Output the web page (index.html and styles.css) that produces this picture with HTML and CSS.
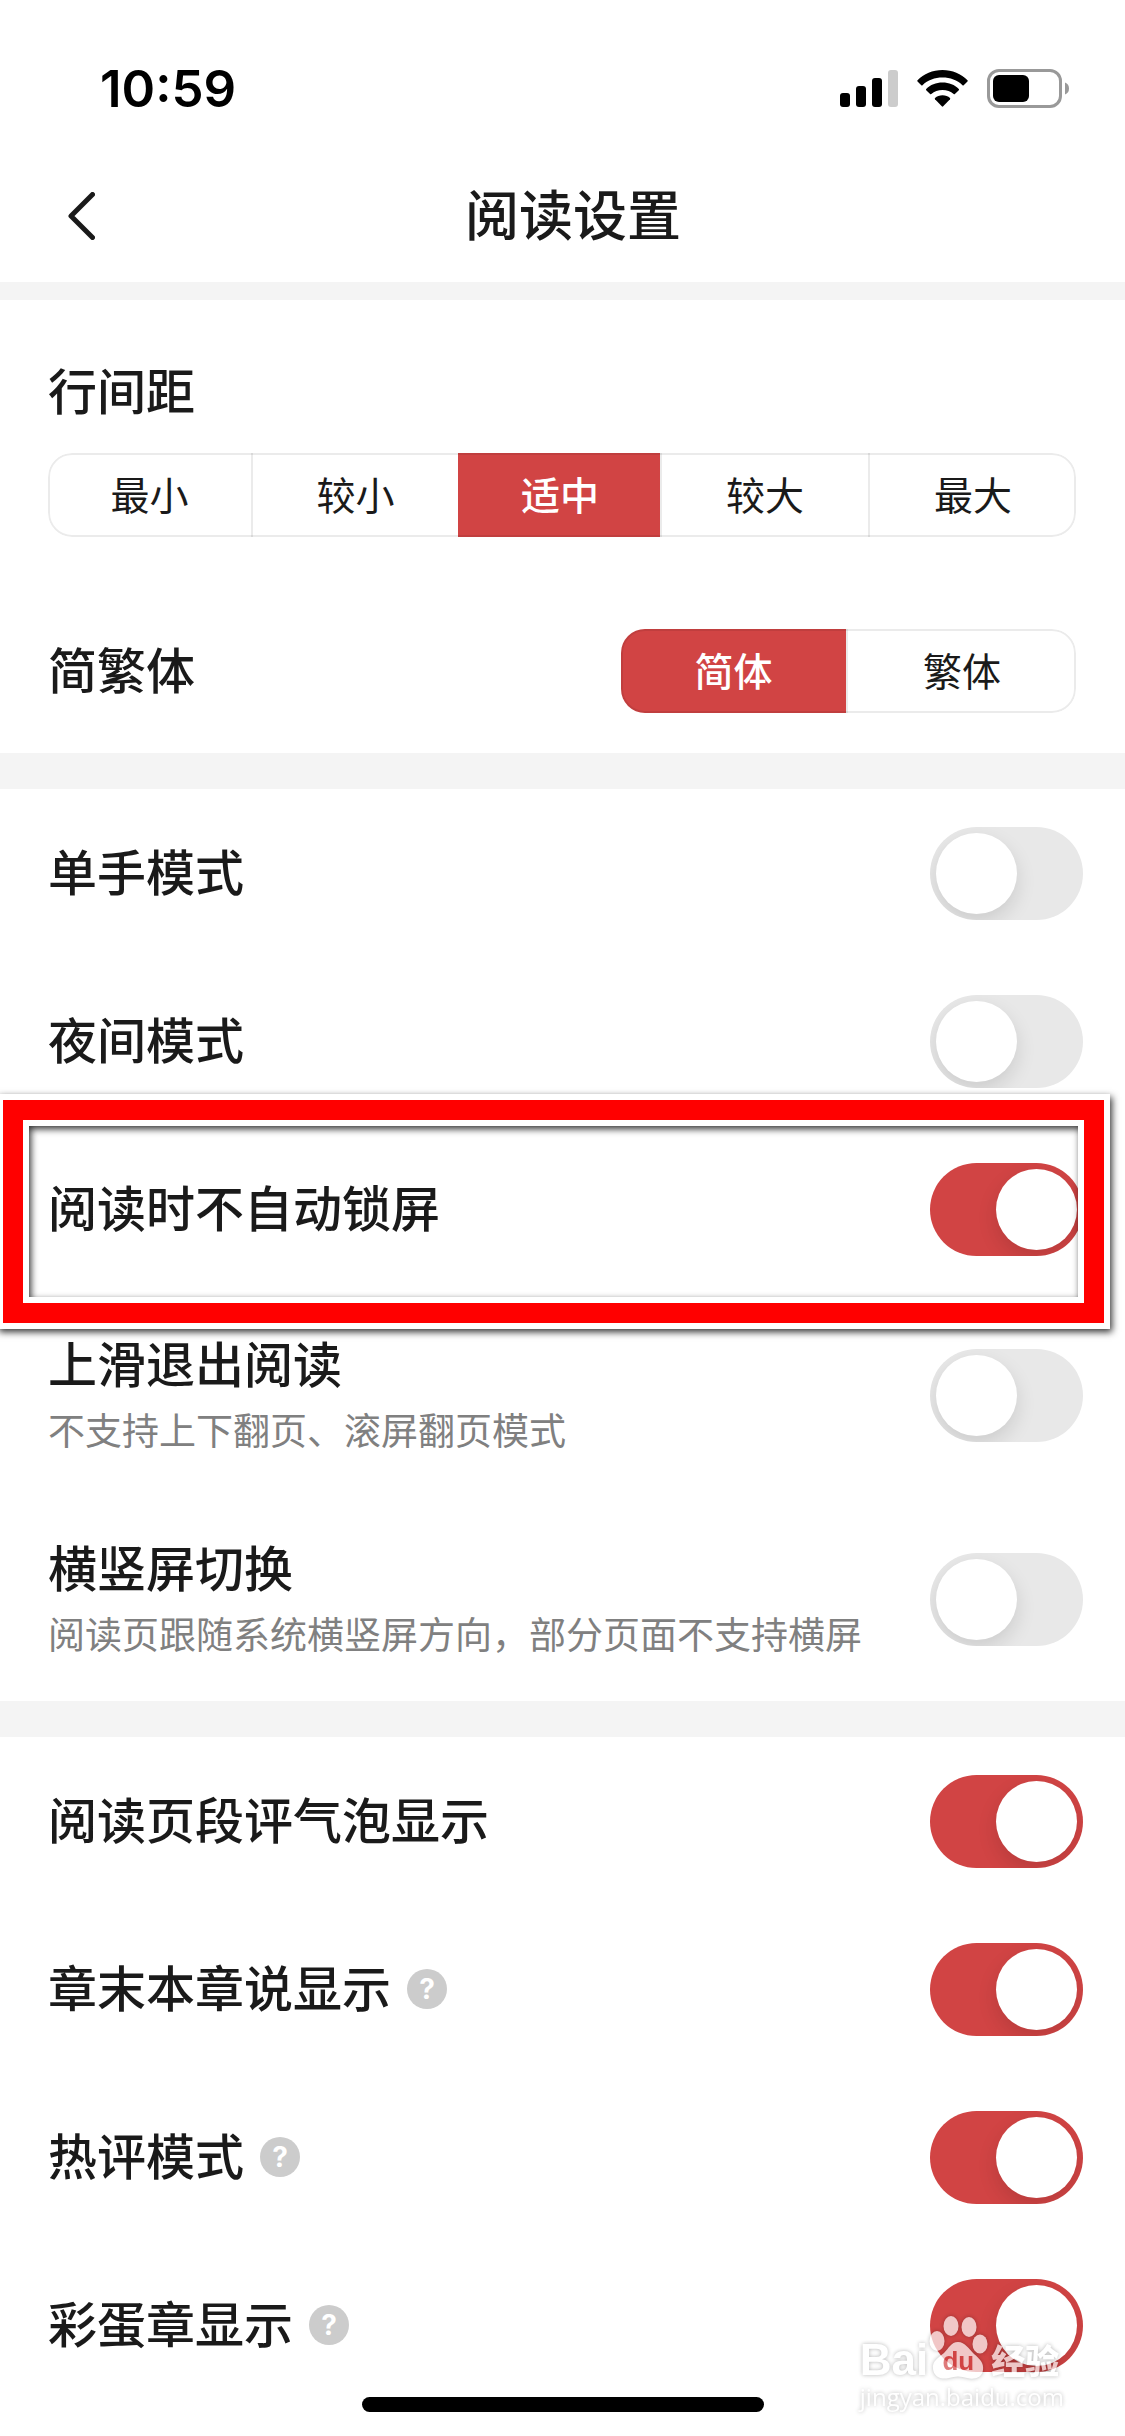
FILE: index.html
```html
<!DOCTYPE html>
<html lang="zh-CN">
<head>
  <meta charset="UTF-8" />
  <meta name="viewport" content="width=device-width, initial-scale=1.0"/>
  <title>阅读设置</title>
  <link rel="stylesheet" href="styles.css">
</head>
<body>
  <div class="status-bar">
    <span class="time">10:59</span>
    <div class="status-icons">
      <svg width="58" height="37" viewBox="0 0 58 37">
        <rect x="0" y="23" width="10" height="14" rx="3"/>
        <rect x="16" y="16" width="10" height="21" rx="3"/>
        <rect x="32" y="8" width="10" height="29" rx="3"/>
        <rect x="48" y="0" width="10" height="37" rx="3" fill="#ccc"/>
      </svg>
      <svg width="51" height="37" viewBox="0 0 51 37">
        <path d="M25.5 0C35.300 0 44.300 3.800 50.500 10.200Q51 10.800 50.500 11.400L46.700 15.200Q46.100 15.700 45.500 15.200C40.200 10.200 33.200 7.600 25.500 7.600S10.800 10.200 5.500 15.200Q4.900 15.700 4.300 15.200L.5 11.400Q0 10.800.5 10.200C6.700 3.800 15.700 0 25.500 0Z"/>
        <path d="M25.500 12.600C32 12.600 37.700 15 41.800 19Q42.300 19.600 41.800 20.200L37.900 24.100Q37.300 24.600 36.700 24.100C33.700 21.500 29.800 20.100 25.500 20.100S17.300 21.500 14.300 24.100Q13.700 24.600 13.100 24.100L9.200 20.200Q8.700 19.600 9.200 19C13.300 15 19 12.600 25.500 12.600Z"/>
        <path d="M25.500 25.300C28.500 25.300 31 26.300 33 28Q33.500 28.600 33 29.200L26.200 36.300Q25.500 37 24.800 36.300L18 29.200Q17.500 28.600 18 28C20 26.300 22.500 25.300 25.500 25.300Z"/>
      </svg>
      <svg width="82" height="39" viewBox="0 0 82 39">
        <rect x="1.500" y="1.500" width="72" height="36" rx="10.500" fill="none" stroke="#999" stroke-width="3"/>
        <rect x="6" y="6" width="36" height="27" rx="6"/>
        <path d="M78 13.500Q82 15 82 19.500T78 25.500Z" fill="#999"/>
      </svg>
    </div>
  </div>

  <header class="nav">
    <button class="back" type="button" aria-label="返回">
      <svg width="27" height="48" viewBox="0 0 27 48">
        <path d="M24.500 2.500 3 24 24.500 45.500" fill="none" stroke="#1a1a1a" stroke-width="5" stroke-linecap="round" stroke-linejoin="round"/>
      </svg>
    </button>
    <h1>阅读设置</h1>
  </header>

  <main>
    <section class="display">
      <h2 class="name">行间距</h2>
      <div class="segment spacing" role="radiogroup" aria-label="行间距">
        <label><input type="radio" name="spacing">最小</label>
        <label><input type="radio" name="spacing">较小</label>
        <label><input type="radio" name="spacing" checked>适中</label>
        <label><input type="radio" name="spacing">较大</label>
        <label><input type="radio" name="spacing">最大</label>
      </div>
      <div class="font-row">
        <h2 class="name">简繁体</h2>
        <div class="segment script" role="radiogroup" aria-label="简繁体">
          <label><input type="radio" name="script" checked>简体</label>
          <label><input type="radio" name="script">繁体</label>
        </div>
      </div>
    </section>

    <section>
      <div class="row">
        <label class="name" for="one-hand">单手模式</label>
        <input class="switch" type="checkbox" id="one-hand">
      </div>
      <div class="row">
        <label class="name" for="night">夜间模式</label>
        <input class="switch" type="checkbox" id="night">
      </div>
      <div class="row marked">
        <label class="name" for="keep-on">阅读时不自动锁屏</label>
        <input class="switch" type="checkbox" id="keep-on" checked>
      </div>
      <div class="row tall">
        <div class="info">
          <label class="name" for="swipe-exit">上滑退出阅读</label>
          <p class="hint">不支持上下翻页、滚屏翻页模式</p>
        </div>
        <input class="switch" type="checkbox" id="swipe-exit">
      </div>
      <div class="row tall">
        <div class="info">
          <label class="name" for="rotate">横竖屏切换</label>
          <p class="hint">阅读页跟随系统横竖屏方向，部分页面不支持横屏</p>
        </div>
        <input class="switch" type="checkbox" id="rotate">
      </div>
    </section>

    <section>
      <div class="row">
        <label class="name" for="bubble">阅读页段评气泡显示</label>
        <input class="switch" type="checkbox" id="bubble" checked>
      </div>
      <div class="row">
        <label class="name" for="chapter-talk">章末本章说显示</label>
        <button class="help" type="button">?</button>
        <input class="switch" type="checkbox" id="chapter-talk" checked>
      </div>
      <div class="row">
        <label class="name" for="hot">热评模式</label>
        <button class="help" type="button">?</button>
        <input class="switch" type="checkbox" id="hot" checked>
      </div>
      <div class="row">
        <label class="name" for="egg">彩蛋章显示</label>
        <button class="help" type="button">?</button>
        <input class="switch" type="checkbox" id="egg" checked>
      </div>
    </section>
  </main>

  <!-- watermark -->
  <div class="watermark">
    <div class="brand">
      <span class="bai">Bai</span>
      <span class="paw">
        <svg width="60" height="64" viewBox="0 0 60 64">
          <ellipse cx="9" cy="25" rx="7.500" ry="10"/>
          <ellipse cx="23" cy="10" rx="7.500" ry="10"/>
          <ellipse cx="41" cy="11" rx="7.500" ry="10"/>
          <ellipse cx="52" cy="28" rx="7.500" ry="9.500"/>
          <path d="M30 26C37 26 41 33 46 38C52 43 56 47 55 54C54 62 46 64 39 62C33 60 27 60 21 62C13 64 6 61 5 53C4 45 10 42 16 37C21 32 23 26 30 26Z"/>
        </svg>
        <span class="du">du</span>
      </span>
      <span class="jy">经验</span>
    </div>
    <div class="site">jingyan.baidu.com</div>
  </div>

  <div class="home-bar"></div>
</body>
</html>
```

FILE: styles.css
```css
* {
  box-sizing: border-box;
}

body {
  margin: 0;
  min-height: 100vh;
  background: #fff;
  color: #1a1a1a;
  font-family: "Noto Sans CJK SC", sans-serif;
}

h1, h2, p {
  margin: 0;
}

button {
  padding: 0;
  border: none;
  background: none;
  cursor: pointer;
}

.status-bar {
  display: flex;
  align-items: center;
  justify-content: space-between;
  height: 150px;
  padding: 27px 56px 0 100px;
}

.time {
  color: #000;
  font: 600 51px/60px Inter, sans-serif;
}

.status-icons {
  display: flex;
  align-items: center;
  gap: 19px;
}

.nav {
  display: grid;
  grid-template-columns: 95px 1fr 74px;
  align-items: center;
  height: 132px;
}

.back {
  display: flex;
  justify-content: flex-end;
}

.nav h1 {
  padding-bottom: 6px;
  font-size: 54px;
  font-weight: 500;
  line-height: 66px;
  text-align: center;
}

section {
  border-top: 36px solid #f4f4f4;
}

.name {
  display: block;
  padding-bottom: 6px;
  font-size: 49px;
  font-weight: 500;
  line-height: 66px;
}

/* segmented pickers */
.display {
  padding: 56px 49px 40px 48px;
  border-top-width: 18px;
}

.segment {
  position: relative;
  display: grid;
  height: 84px;
  overflow: hidden;
  border-radius: 24px;
}

/* outline sits over the selected cell too */
.segment::after {
  content: "";
  position: absolute;
  inset: 0;
  border: 2px solid rgba(0, 0, 0, 0.08);
  border-radius: 24px;
  pointer-events: none;
}

.spacing {
  grid-template-columns: 203fr 207fr 202fr 208fr 208fr;
  margin-top: 25px;
}

.script {
  grid-template-columns: 225fr 230fr;
  width: 455px;
}

.segment label {
  display: flex;
  align-items: center;
  justify-content: center;
  padding-bottom: 4px;
  font-size: 39px;
  cursor: pointer;
}

.segment label + label {
  border-left: 2px solid #ebebeb;
}

.segment input {
  appearance: none;
  width: 0;
  margin: 0;
}

.segment label:has(input:checked) {
  background: #d14444;
  border-color: #d14444;
  color: #fff;
  font-weight: 500;
}

.font-row {
  display: flex;
  align-items: center;
  justify-content: space-between;
  margin-top: 92px;
}

/* switch rows */
.row {
  display: flex;
  align-items: center;
  height: 168px;
  padding: 0 42px 0 48px;
}

.tall {
  height: 204px;
}

.hint {
  padding-bottom: 4px;
  color: #808080;
  font-size: 37px;
  line-height: 56px;
}

.help {
  width: 40px;
  height: 40px;
  margin-left: 16px;
  border-radius: 50%;
  background: #ccc;
  color: #fff;
  font: 700 28px/40px Inter, sans-serif;
}

.switch {
  appearance: none;
  flex: none;
  width: 153px;
  height: 93px;
  margin: 0 0 0 auto;
  padding: 6px;
  overflow: hidden;
  border-radius: 47px;
  background: #e8e8e8;
  cursor: pointer;
}

.switch::before {
  content: "";
  display: block;
  width: 81px;
  height: 81px;
  border-radius: 50%;
  background: #fff;
  box-shadow: 0 8px 20px rgba(0, 0, 0, 0.12);
}

.switch:checked {
  background: #d14444;
}

.switch:checked::before {
  margin-left: auto;
}

/* red frame */
.marked {
  position: relative;
}

.marked::after {
  content: "";
  position: absolute;
  z-index: 1;
  top: -25px;
  right: 21px;
  bottom: -30px;
  left: 3px;
  border: 20px solid #f00;
  box-shadow: 0 0 0 6px #fff, 2px 3px 7px 6px rgba(0, 0, 0, 0.8),
    inset 0 0 0 6px #fff, inset 2px 3px 7px 6px rgba(0, 0, 0, 0.8);
  pointer-events: none;
}

.watermark {
  position: absolute;
  top: 2316px;
  right: 61px;
  color: #fff;
  opacity: 0.7;
  filter: drop-shadow(0 0 2px rgba(0, 0, 0, 0.4));
  pointer-events: none;
}

.brand {
  display: flex;
  align-items: flex-end;
  height: 64px;
}

.bai {
  font: 700 44px/40px "Liberation Sans", sans-serif;
}

.paw {
  position: relative;
  height: 64px;
}

.paw svg {
  display: block;
  fill: #fff;
}

.du {
  position: absolute;
  right: 0;
  bottom: 6px;
  left: 0;
  color: #d14444;
  font: 700 26px/26px "Liberation Sans", sans-serif;
  text-align: center;
}

.jy {
  margin-left: 3px;
  font-size: 34px;
  font-weight: 900;
  line-height: 40px;
}

.site {
  font: 24px/34px "Open Sans", sans-serif;
}

.home-bar {
  position: fixed;
  bottom: 24px;
  left: 50%;
  width: 402px;
  height: 15px;
  margin-left: -201px;
  border-radius: 8px;
  background: #000;
}
```
